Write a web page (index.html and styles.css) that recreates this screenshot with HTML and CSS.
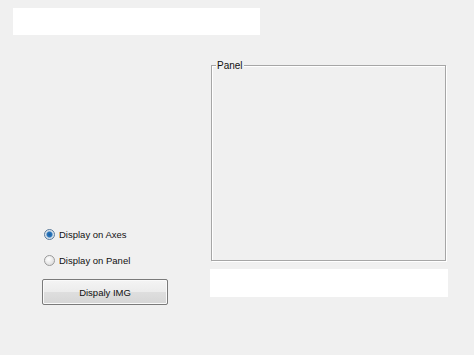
FILE: index.html
```html
<!DOCTYPE html>
<html lang="en">
<head>
    <meta charset="UTF-8">
    <title>Display IMG</title>
    <link rel="stylesheet" href="styles.css">
</head>
<body>
    <div class="app">
        <div class="text-field"></div>

        <div class="main">
            <div class="controls">
                <label class="radio-row">
                    <span class="radio checked"></span>
                    <span>Display on Axes</span>
                </label>
                <label class="radio-row">
                    <span class="radio"></span>
                    <span>Display on Panel</span>
                </label>
                <button class="push-btn">Dispaly IMG</button>
            </div>

            <div class="right-col">
                <div class="panel">
                    <span class="panel-title">Panel</span>
                </div>
                <div class="output-field"></div>
            </div>
        </div>
    </div>
</body>
</html>
```

FILE: styles.css
```css
body {
    margin: 0;
    background-color: #f0f0f0;
    font-family: "Liberation Sans", Arial, sans-serif;
    font-size: 9.5px;
    color: #111;
}
.app {
    width: 474px;
    height: 355px;
    padding-top: 8px;
    box-sizing: border-box;
}
.text-field {
    margin-left: 13px;
    width: 247px;
    height: 27px;
    background-color: #fff;
}
.main {
    display: flex;
    margin-top: 30px;
}
.controls {
    margin-left: 42px;
    width: 126px;
    padding-top: 162px;
    display: flex;
    flex-direction: column;
}
.radio-row {
    display: flex;
    align-items: center;
    gap: 4px;
    height: 14px;
    padding-left: 2px;
    margin-bottom: 12px;
}
.radio {
    width: 11px;
    height: 11px;
    border: 1px solid #9a9a9a;
    border-radius: 50%;
    box-sizing: border-box;
    background: radial-gradient(circle at 40% 35%, #ffffff, #d4d4d4);
}
.radio.checked {
    border-color: #5a7a9a;
    background: radial-gradient(circle at 50% 50%, #1e5d9c 0, #2a78c0 2.5px, #cfdbe6 3.5px, #e8eef4 5px);
}
.push-btn {
    height: 26px;
    padding: 0;
    font-family: inherit;
    font-size: 9.5px;
    color: #111;
    border: 1px solid #7a7a7a;
    border-radius: 2px;
    background: linear-gradient(#f4f4f4, #ececec 48%, #dedede 52%, #d6d6d6);
    box-shadow: inset 0 0 0 1px #fafafa;
}
.right-col {
    margin-left: 42px;
}
.panel {
    position: relative;
    margin-left: 1px;
    width: 235px;
    height: 196px;
    border: 1px solid #a6a6a6;
    box-shadow: inset 1px 1px 0 #ffffff, 1px 1px 0 #ffffff;
    box-sizing: border-box;
}
.panel-title {
    position: absolute;
    top: -6px;
    left: 4px;
    padding: 0 1px;
    line-height: 12px;
    font-size: 10px;
    background-color: #f0f0f0;
}
.output-field {
    margin-top: 8px;
    width: 238px;
    height: 28px;
    background-color: #fff;
}
```
